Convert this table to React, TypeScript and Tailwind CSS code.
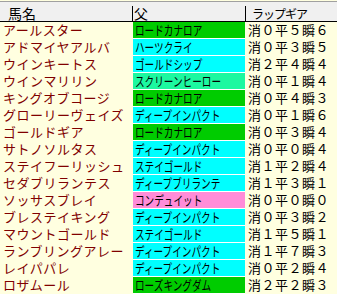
const rows: [string, string, string, string][] = [
  ['アールスター', 'ロードカナロア', 'bg-[#00cc00]', '消０平５瞬６'],
  ['アドマイヤアルバ', 'ハーツクライ', 'bg-[#00ffff]', '消０平３瞬５'],
  ['ウインキートス', 'ゴールドシップ', 'bg-[#00ffff]', '消２平４瞬４'],
  ['ウインマリリン', 'スクリーンヒーロー', 'bg-[#1cf8a0]', '消０平１瞬４'],
  ['キングオブコージ', 'ロードカナロア', 'bg-[#00cc00]', '消０平４瞬３'],
  ['グローリーヴェイズ', 'ディープインパクト', 'bg-[#00ffff]', '消０平１瞬６'],
  ['ゴールドギア', 'ロードカナロア', 'bg-[#00cc00]', '消０平３瞬４'],
  ['サトノソルタス', 'ディープインパクト', 'bg-[#00ffff]', '消０平０瞬４'],
  ['ステイフーリッシュ', 'ステイゴールド', 'bg-[#00ffff]', '消１平２瞬４'],
  ['セダブリランテス', 'ディープブリランテ', 'bg-[#00ffff]', '消１平３瞬１'],
  ['ソッサスブレイ', 'コンデュイット', 'bg-[#ff8cd8]', '消０平０瞬０'],
  ['ブレステイキング', 'ディープインパクト', 'bg-[#00ffff]', '消０平３瞬２'],
  ['マウントゴールド', 'ステイゴールド', 'bg-[#00ffff]', '消１平５瞬１'],
  ['ランブリングアレー', 'ディープインパクト', 'bg-[#00ffff]', '消１平７瞬３'],
  ['レイパパレ', 'ディープインパクト', 'bg-[#00ffff]', '消０平２瞬４'],
  ['ロザムール', 'ローズキングダム', 'bg-[#00cc00]', '消２平２瞬３'],
];

export default function App() {
  return (
    <div
      className="w-[337px] h-[294px] overflow-hidden bg-[#ffffe0] text-[13px] leading-[16px]"
      style={{ fontFamily: '"Noto Sans CJK JP", "MS PGothic", sans-serif' }}
    >
      {/* header */}
      <div className="h-[21px] mt-[1px] border-t border-[#a0a0a0] border-b border-b-black bg-[#f0f0f0] flex items-end text-black">
        <div className="w-[133px] h-[15px] leading-[15px] pl-[8px] text-[14px] border-r border-black">馬名</div>
        <div className="w-[113px] h-[15px] leading-[15px] pl-[1px] text-[14px] border-r border-black">父</div>
        <div className="flex-1 h-[15px] leading-[15px] pl-[6px] text-[12px] tracking-[-1px]">ラップギア</div>
      </div>

      {rows.map(([name, sire, color, gear]) => (
        <div key={name} className="flex h-[17px]">
          <div className="w-[133px] h-[16px] pl-[3px] text-[#800000] tracking-[0.5px] whitespace-nowrap">{name}</div>
          <div className={`w-[112px] h-[17px] ${color} border-b border-white pl-[2px] text-black overflow-hidden`}>
            <span className="inline-block whitespace-nowrap origin-left scale-x-[0.74]">{sire}</span>
          </div>
          <div className="flex-1 h-[16px] pl-[3px] text-black tracking-[0.5px] whitespace-nowrap">{gear}</div>
        </div>
      ))}
    </div>
  );
}
